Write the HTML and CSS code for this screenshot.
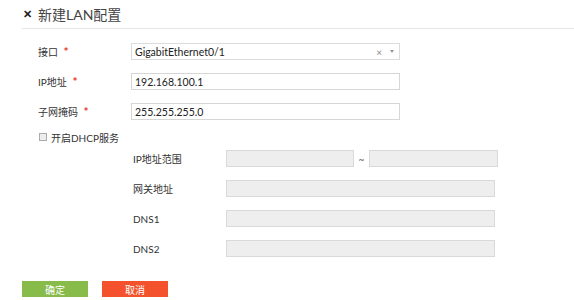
FILE: index.html
```html
<!DOCTYPE html>
<html lang="zh-CN">
<head>
    <meta charset="UTF-8">
    <title>新建LAN配置</title>
    <link rel="stylesheet" href="styles.css">
</head>
<body>
    <div class="header">
        <span class="close">✕</span>
        <span class="title">新建LAN配置</span>
    </div>

    <form class="lan-form">
        <div class="row">
            <label class="label">接口 <span class="star">*</span></label>
            <div class="select">
                <span class="select-text">GigabitEthernet0/1</span>
                <span class="clear">×</span>
                <span class="arrow"></span>
            </div>
        </div>
        <div class="row">
            <label class="label">IP地址 <span class="star">*</span></label>
            <input type="text" class="text-input" value="192.168.100.1">
        </div>
        <div class="row">
            <label class="label">子网掩码 <span class="star">*</span></label>
            <input type="text" class="text-input" value="255.255.255.0">
        </div>

        <div class="check-row">
            <span class="checkbox"></span>
            <span>开启DHCP服务</span>
        </div>

        <div class="dhcp">
            <div class="sub-row">
                <label class="sub-label">IP地址范围</label>
                <input type="text" class="off-input short" disabled>
                <span class="tilde">~</span>
                <input type="text" class="off-input short2" disabled>
            </div>
            <div class="sub-row">
                <label class="sub-label">网关地址</label>
                <input type="text" class="off-input" disabled>
            </div>
            <div class="sub-row">
                <label class="sub-label">DNS1</label>
                <input type="text" class="off-input" disabled>
            </div>
            <div class="sub-row">
                <label class="sub-label">DNS2</label>
                <input type="text" class="off-input" disabled>
            </div>
        </div>

        <div class="buttons">
            <button type="button" class="btn ok">确定</button>
            <button type="button" class="btn cancel">取消</button>
        </div>
    </form>
</body>
</html>
```

FILE: styles.css
```css
body {
    margin: 0;
    font-family: Lato, "Noto Sans CJK SC", sans-serif;
    font-size: 10px;
    color: #333;
    background: #fff;
}
.header {
    display: flex;
    align-items: center;
    height: 28px;
    margin-left: 22px;
    border-bottom: 1px solid #e6e6e6;
}
.close {
    font-size: 11px;
    font-weight: bold;
    color: #222;
    margin-left: 1px;
    width: 15px;
}
.title {
    font-size: 14px;
    color: #444;
}
.lan-form {
    padding: 14px 0 0 38px;
}
.row {
    display: flex;
    align-items: center;
    height: 17px;
    margin-bottom: 13px;
}
.label {
    width: 93px;
}
.star {
    color: #e8332a;
    font-size: 12px;
    font-weight: bold;
    margin-left: 3px;
}
.select {
    display: flex;
    align-items: center;
    box-sizing: border-box;
    width: 269px;
    height: 17px;
    border: 1px solid #dcdcdc;
    padding: 0 5px 0 3px;
    font-size: 10.5px;
    color: #222;
}
.select-text {
    flex: 1;
}
.clear {
    color: #888;
    font-size: 10px;
    margin-right: 8px;
}
.arrow {
    width: 0;
    height: 0;
    border-left: 2.5px solid transparent;
    border-right: 2.5px solid transparent;
    border-top: 3px solid #999;
}
.text-input {
    box-sizing: border-box;
    width: 269px;
    height: 17px;
    border: 1px solid #d6d6d6;
    padding: 0 3px;
    font: inherit;
    font-size: 10.5px;
    color: #222;
    outline: none;
}
.check-row {
    display: flex;
    align-items: center;
    margin-top: -3px;
    height: 14px;
}
.checkbox {
    box-sizing: border-box;
    width: 8px;
    height: 8px;
    border: 1px solid #aaa;
    background: #eee;
    margin: 0 4px 0 1px;
}
.dhcp {
    padding: 6px 0 0 95px;
}
.sub-row {
    display: flex;
    align-items: center;
    height: 17px;
    margin-bottom: 13px;
}
.sub-label {
    width: 93px;
}
.off-input {
    box-sizing: border-box;
    width: 269px;
    height: 17px;
    border: 1px solid #d9d9d9;
    background: #eeeeee;
}
.short {
    width: 128px;
}
.short2 {
    width: 129px;
}
.tilde {
    width: 15px;
    text-align: center;
    color: #555;
}
.buttons {
    display: flex;
    gap: 14px;
    margin: 24px 0 0 -16px;
}
.btn {
    width: 66px;
    height: 16px;
    border: none;
    padding: 0;
    color: #fff;
    font: inherit;
    font-size: 10px;
    cursor: pointer;
}
.ok {
    background: #87bb4a;
}
.cancel {
    background: #f4522c;
}
```
